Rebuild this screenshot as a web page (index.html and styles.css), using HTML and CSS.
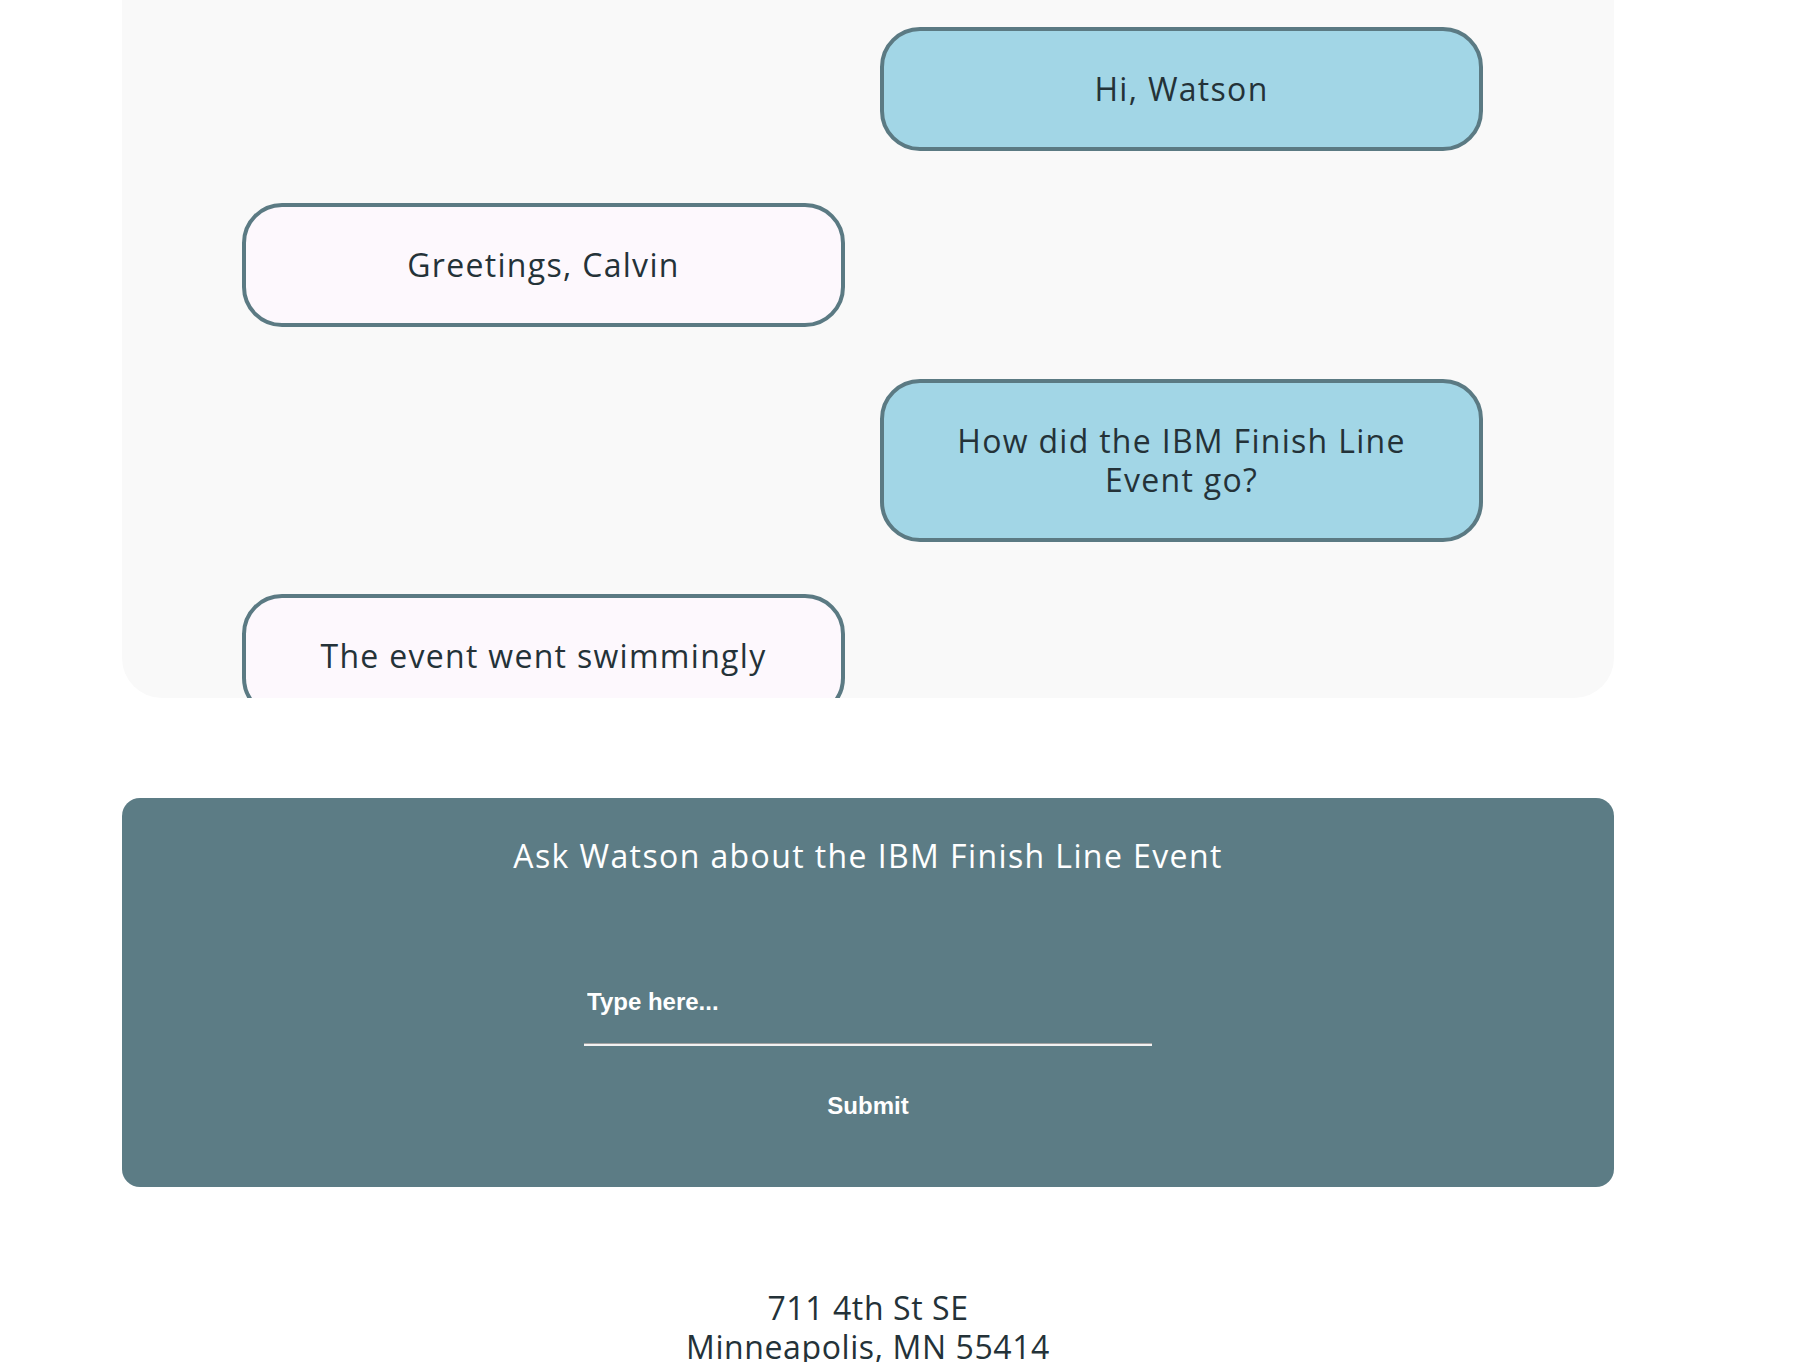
FILE: index.html
```html
<!DOCTYPE html>
<html lang="en">
<head>
<meta charset="utf-8">
<title>Ask Watson</title>
<link rel="stylesheet" href="styles.css">
</head>
<body>
<div class="page">
  <section class="chat">
    <div class="bubble me">Hi, Watson</div>
    <div class="bubble bot">Greetings, Calvin</div>
    <div class="bubble me">How did the IBM Finish Line Event go?</div>
    <div class="bubble bot">The event went swimmingly</div>
  </section>
  <form class="ask">
    <h2 class="ask-title">Ask Watson about the IBM Finish Line Event</h2>
    <input class="ask-input" type="text" placeholder="Type here...">
    <button class="ask-submit" type="button">Submit</button>
  </form>
  <footer class="address">
    <div>711 4th St SE</div>
    <div>Minneapolis, MN 55414</div>
  </footer>
</div>
</body>
</html>
```
FILE: styles.css
```css
html, body {
  margin: 0;
  padding: 0;
  background: #ffffff;
}
body {
  font-family: "Open Sans", "Liberation Sans", sans-serif;
  color: #243238;
}
.page {
  width: 1492px;
  margin-left: 122px;
}
.chat {
  height: 698px;
  box-sizing: border-box;
  background: #f9f9f9;
  border-radius: 0 0 40px 40px;
  overflow: hidden;
  padding-top: 27px;
  display: flex;
  flex-direction: column;
  gap: 52px;
}
.bubble {
  width: 603px;
  box-sizing: border-box;
  border: 4px solid #5b7a83;
  border-radius: 40px;
  padding: 38px 50px 39px;
  text-align: center;
  font-size: 32px;
  line-height: 39px;
  letter-spacing: 1.3px;
  color: #243238;
  flex: none;
}
.bubble.me {
  align-self: flex-end;
  margin-right: 131px;
  background: #a2d6e6;
}
.bubble.bot {
  align-self: flex-start;
  margin-left: 120px;
  background: #fdf8fd;
}
.ask {
  margin-top: 100px;
  height: 389px;
  box-sizing: border-box;
  background: #5c7c85;
  border-radius: 18px;
  padding-top: 38px;
  display: flex;
  flex-direction: column;
  align-items: center;
}
.ask-title {
  margin: 0;
  font-weight: 400;
  font-size: 32px;
  line-height: 39px;
  letter-spacing: 1.4px;
  color: #ffffff;
}
.ask-input {
  display: block;
  margin-top: 85px;
  width: 568px;
  height: 86px;
  box-sizing: border-box;
  padding: 0 3px;
  border: none;
  border-bottom: 2px solid #f2f2f2;
  box-shadow: inset 0 -1px 0 #a3a3a3;
  background: transparent;
  font-family: "Liberation Sans", Arial, sans-serif;
  font-weight: 700;
  font-size: 24px;
  color: #ffffff;
  outline: none;
}
.ask-input::placeholder {
  color: #ffffff;
  opacity: 1;
}
.ask-submit {
  margin-top: 46px;
  padding: 0;
  border: none;
  background: transparent;
  font-family: "Liberation Sans", Arial, sans-serif;
  font-weight: 700;
  font-size: 24px;
  line-height: 28px;
  color: #ffffff;
  cursor: pointer;
}
.address {
  margin-top: 101px;
  text-align: center;
  font-size: 32px;
  line-height: 39px;
  letter-spacing: 0.6px;
  color: #243238;
}
```
